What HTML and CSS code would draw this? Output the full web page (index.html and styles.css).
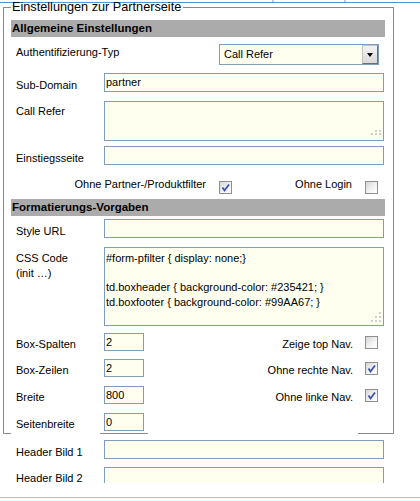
FILE: index.html
```html
<!DOCTYPE html>
<html lang="de">
<head>
<meta charset="utf-8">
<title>Einstellungen zur Partnerseite</title>
<link rel="stylesheet" href="styles.css">
</head>
<body>
<div class="pane">
  <div class="tabline"><span class="tick"></span><span class="tick"></span></div>
  <fieldset class="box">
    <legend>Einstellungen zur Partnerseite</legend>
    <div class="bar bar1">Allgemeine Einstellungen</div>

    <div class="row r-auth">
      <span class="lbl">Authentifizierung-Typ</span>
      <div class="select">
        <span class="sel-val">Call Refer</span>
        <span class="sel-btn"><span class="tri"></span></span>
      </div>
    </div>

    <div class="row r-sub">
      <span class="lbl">Sub-Domain</span>
      <div class="inp wide">partner</div>
    </div>

    <div class="row r-call">
      <span class="lbl lbl-ta">Call Refer</span>
      <div class="ta ta-call">
        <svg class="grip" width="11" height="8" viewBox="0 0 11 8"><rect x="5" y="0" width="2" height="2"/><rect x="9" y="0" width="2" height="2"/><rect x="1" y="3" width="2" height="2"/><rect x="5" y="3" width="2" height="2"/><rect x="9" y="3" width="2" height="2"/></svg>
      </div>
    </div>

    <div class="row r-ein">
      <span class="lbl">Einstiegsseite</span>
      <div class="inp wide"></div>
    </div>

    <div class="cbrow">
      <div class="cbgrp first">
        <span class="cbt">Ohne Partner-/Produktfilter</span>
        <span class="cb on"><svg width="11" height="11" viewBox="0 0 11 11"><polyline points="2.5,5.5 4.5,8.5 9,2.5"/></svg></span>
      </div>
      <div class="cbgrp second">
        <span class="cbt">Ohne Login</span>
        <span class="cb"></span>
      </div>
    </div>

    <div class="bar bar2">Formatierungs-Vorgaben</div>

    <div class="row r-style">
      <span class="lbl">Style URL</span>
      <div class="inp wide"></div>
    </div>

    <div class="row r-css">
      <span class="lbl lbl-css">CSS Code<br>(init …)</span>
      <div class="ta ta-css">#form-pfilter { display: none;}

td.boxheader { background-color: #235421; }
td.boxfooter { background-color: #99AA67; }<svg class="grip" width="11" height="11" viewBox="0 0 11 11"><rect x="9" y="0" width="2" height="2"/><rect x="5" y="4" width="2" height="2"/><rect x="9" y="4" width="2" height="2"/><rect x="1" y="8" width="2" height="2"/><rect x="5" y="8" width="2" height="2"/><rect x="9" y="8" width="2" height="2"/></svg></div>
    </div>

    <div class="row r-box1">
      <span class="lbl lbl-s">Box-Spalten</span>
      <div class="inp small">2</div>
      <div class="opt">
        <span class="opt-t">Zeige top Nav.</span>
        <span class="cb"></span>
      </div>
    </div>

    <div class="row r-box2">
      <span class="lbl lbl-s">Box-Zeilen</span>
      <div class="inp small">2</div>
      <div class="opt">
        <span class="opt-t">Ohne rechte Nav.</span>
        <span class="cb on"><svg width="11" height="11" viewBox="0 0 11 11"><polyline points="2.5,5.5 4.5,8.5 9,2.5"/></svg></span>
      </div>
    </div>

    <div class="row r-box3">
      <span class="lbl lbl-s">Breite</span>
      <div class="inp small">800</div>
      <div class="opt">
        <span class="opt-t">Ohne linke Nav.</span>
        <span class="cb on"><svg width="11" height="11" viewBox="0 0 11 11"><polyline points="2.5,5.5 4.5,8.5 9,2.5"/></svg></span>
      </div>
    </div>

    <div class="row r-box4">
      <span class="lbl lbl-s">Seitenbreite</span>
      <div class="inp small">0</div>
    </div>
  </fieldset>
  <div class="fs-bottom"><span class="seg s1"></span><span class="seg s2"></span><span class="seg s3"></span></div>

  <div class="row hrow h1">
    <span class="lbl">Header Bild 1</span>
    <div class="inp wide"></div>
  </div>
  <div class="row hrow h2">
    <span class="lbl">Header Bild 2</span>
    <div class="inp wide"></div>
  </div>
</div>
<div class="footline"></div>
</body>
</html>
```

FILE: styles.css
```css
* { box-sizing: border-box; }
html, body { margin: 0; padding: 0; background: #fff; }
body {
  font-family: "Liberation Sans", Arial, sans-serif;
  font-size: 11px;
  color: #000;
  width: 420px;
  height: 501px;
  overflow: hidden;
}
.pane { height: 483px; overflow: hidden; }

.tabline {
  height: 3px;
  border-bottom: 1px solid #4a96de;
  display: flex;
  padding-left: 272px;
  gap: 70px;
}
.tick { width: 2px; height: 2px; background: #b7cfe8; }

.box {
  margin: -3px 0 0 3px;
  width: 391px;
  padding: 0 8px 2px 7px;
  border: 1px solid #8a8a8a;
  border-bottom: 0;
  min-inline-size: 0;
}
.box legend {
  padding: 0 2px 0 1px;
  font-size: 12.7px;
  line-height: 14px;
  white-space: nowrap;
}

.bar {
  height: 17px;
  line-height: 17px;
  background: #ababab;
  font-weight: bold;
  font-size: 11.5px;
  padding-left: 1px;
  white-space: nowrap;
}
.bar1 { margin-top: 6px; }
.bar2 { margin-top: 5px; }

.row { display: flex; align-items: flex-start; }
.lbl {
  flex: 0 0 93px;
  padding-left: 5px;
  padding-top: 6px;
  line-height: 13px;
  white-space: nowrap;
}
.lbl-ta { padding-top: 4px; }
.lbl-css { padding-top: 4px; line-height: 15px; }
.lbl-s { padding-top: 5px; }

.inp {
  height: 19px;
  border: 1px solid #7f9db9;
  background: #fffff0;
  padding: 0 1px;
  line-height: 17px;
  white-space: nowrap;
}
.wide { width: 280px; }
.small { width: 40px; height: 18px; line-height: 16px; }

.r-auth { margin-top: 7px; }
.r-auth .lbl { padding-top: 2px; }
.r-sub { margin-top: 8px; }
.r-call { margin-top: 9px; }
.r-ein { margin-top: 5px; }
.r-style { margin-top: 3px; }
.r-css { margin-top: 9px; }
.r-box1 { margin-top: 7px; }
.r-box2 { margin-top: 8px; }
.r-box3 { margin-top: 9px; }
.r-box4 { margin-top: 9px; }

.select {
  display: flex;
  width: 160px;
  height: 21px;
  margin-left: auto;
  margin-right: 6px;
  border: 1px solid #7f9db9;
  background: #fffff0;
}
.sel-val { flex: 1; padding-left: 4px; line-height: 19px; }
.sel-btn {
  width: 16px;
  height: 19px;
  border: 1px solid;
  border-color: #c4c4c4 #6f6f6f #6f6f6f #c4c4c4;
  background: linear-gradient(#f2f2f2, #d9d9d9);
  display: flex;
  align-items: center;
  justify-content: center;
}
.tri {
  width: 0;
  height: 0;
  border-left: 3.5px solid transparent;
  border-right: 3.5px solid transparent;
  border-top: 4px solid #000;
}

.ta {
  position: relative;
  width: 280px;
  border: 1px solid #7f9db9;
  background: #fffff0;
  padding: 3px 1px;
  line-height: 14.7px;
  white-space: pre;
  overflow: hidden;
}
.ta-call { height: 40px; }
.ta-css { height: 79px; }
.grip { position: absolute; right: 2px; bottom: 2px; fill: #cfcfcf; }

.cbrow { display: flex; align-items: flex-start; margin-top: 13px; }
.cbgrp { display: flex; align-items: flex-start; justify-content: flex-end; }
.cbgrp.first { width: 221px; }
.cbgrp.second { flex: 1; padding-right: 7px; }
.cbt { line-height: 13px; white-space: nowrap; }

.cb {
  width: 13px;
  height: 13px;
  margin-top: 3px;
  margin-left: 13px;
  border: 1px solid #8e8f8f;
  background: linear-gradient(135deg, #d6d6d6 0%, #f4f4f4 60%, #ffffff 100%);
  display: flex;
}
.cb svg { display: block; }
.cb polyline { fill: none; stroke: #3b52b4; stroke-width: 1.8; }

.opt {
  flex: 1;
  display: flex;
  align-items: flex-start;
  justify-content: flex-end;
  padding-right: 7px;
}
.opt-t { line-height: 13px; padding-top: 5px; white-space: nowrap; }
.opt .cb { margin-left: 12px; margin-top: 3px; }

.fs-bottom { display: flex; margin-left: 3px; height: 1px; }
.seg { height: 1px; background: #8a8a8a; }
.s1 { width: 8px; }
.s2 { width: 48px; margin-left: 89px; }
.s3 { width: 36px; margin-left: 210px; }

.hrow { margin-left: 11px; }
.h1 { margin-top: 6px; }
.h2 { margin-top: 8px; }
.h2 .lbl { padding-top: 5px; }

.footline { margin-top: 14px; height: 1px; background: #a3c5dd; }
```
